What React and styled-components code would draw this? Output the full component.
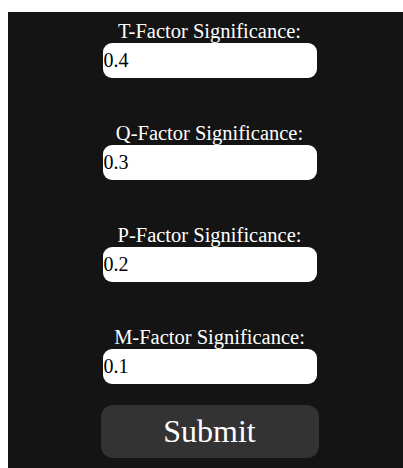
import React, { useState } from 'react'
import styled, { createGlobalStyle } from 'styled-components'

const GlobalStyle = createGlobalStyle`
    html, body {
        background: #ffffff;
        overflow: hidden;
    }
    body {
        margin: 12px 0 0 8px;
        font-family: "Liberation Serif", "Times New Roman", serif;
    }
`

const factors = [
    { key: 't', label: 'T-Factor Significance:', value: '0.4' },
    { key: 'q', label: 'Q-Factor Significance:', value: '0.3' },
    { key: 'p', label: 'P-Factor Significance:', value: '0.2' },
    { key: 'm', label: 'M-Factor Significance:', value: '0.1' },
]

function App() {
    const [values, setValues] = useState(
        Object.fromEntries(factors.map(f => [f.key, f.value]))
    )

    const update = (key) => (e) => {
        setValues({ ...values, [key]: e.target.value })
    }

    return (
        <>
            <GlobalStyle />
            <Panel>
                <Form onSubmit={e => e.preventDefault()}>
                    {factors.map(f => (
                        <Field key={f.key}>
                            <Label htmlFor={f.key}>{f.label}</Label>
                            <Input id={f.key} type="text" value={values[f.key]} onChange={update(f.key)} />
                        </Field>
                    ))}
                    <SubmitButton type="submit">Submit</SubmitButton>
                </Form>
            </Panel>
        </>
    )
}

const Panel = styled.div`
    width: 100vw;
    min-height: 100vh;
    background: #141414;
    padding-top: 8px;
    box-sizing: border-box;
`

const Form = styled.form`
    display: flex;
    flex-direction: column;
    align-items: center;
    gap: 44px;
`

const Field = styled.div`
    display: flex;
    flex-direction: column;
    align-items: center;
`

const Label = styled.label`
    font-size: 20.5px;
    line-height: 23px;
    color: #ffffff;
`

const Input = styled.input`
    width: 214px;
    height: 35px;
    box-sizing: border-box;
    border: none;
    border-radius: 9px;
    padding: 0 1px;
    background: #ffffff;
    color: #000000;
    font-family: "Liberation Serif", "Times New Roman", serif;
    font-size: 20px;
    outline: none;
`

const SubmitButton = styled.button`
    margin-top: -23px;
    width: 218px;
    height: 53px;
    border: none;
    border-radius: 12px;
    background: #333333;
    color: #ffffff;
    font-family: "Liberation Serif", "Times New Roman", serif;
    font-size: 32px;
    cursor: pointer;
`

export default App
